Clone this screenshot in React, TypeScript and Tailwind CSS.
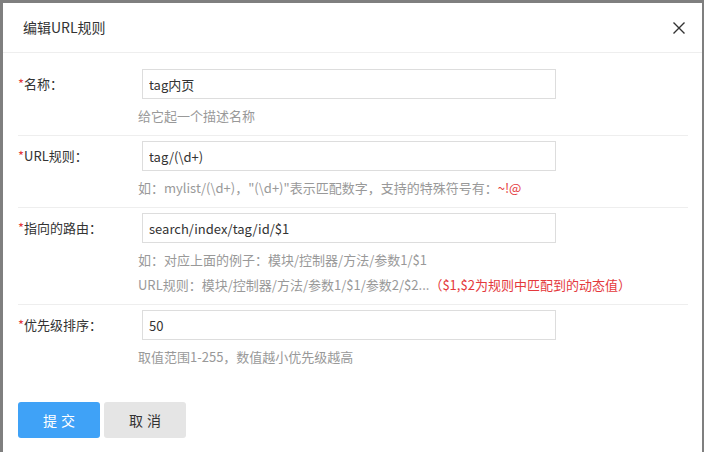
const font = { fontFamily: '"Noto Sans CJK SC", "Noto Sans", sans-serif' };

type Row = {
  label: string;
  value: string;
  hints: React.ReactNode[];
};

const rows: Row[] = [
  { label: '名称', value: 'tag内页', hints: ['给它起一个描述名称'] },
  {
    label: 'URL规则',
    value: 'tag/(\\d+)',
    hints: [
      <>
        如：mylist/(\d+)，"(\d+)"表示匹配数字，支持的特殊符号有：<span className="text-[#e4393c]">~!@</span>
      </>,
    ],
  },
  {
    label: '指向的路由',
    value: 'search/index/tag/id/$1',
    hints: [
      '如：对应上面的例子：模块/控制器/方法/参数1/$1',
      <>
        URL规则：模块/控制器/方法/参数1/$1/参数2/$2...<span className="text-[#e4393c]">（$1,$2为规则中匹配到的动态值）</span>
      </>,
    ],
  },
  { label: '优先级排序', value: '50', hints: ['取值范围1-255，数值越小优先级越高'] },
];

function FormRow({ row, first, last }: { row: Row; first: boolean; last: boolean }) {
  return (
    <div className={`${first ? 'pt-[16px]' : 'pt-[5px]'} pb-[7px] ${last ? '' : 'border-b border-[#eeeeee]'}`}>
      <div className="flex items-center">
        <label className="w-[124px] text-[13px] text-[#333]">
          <span className="text-[#e4393c]">*</span>
          {row.label}：
        </label>
        <input
          readOnly
          value={row.value}
          style={font}
          className="h-[30px] w-[414px] border border-[#dddddd] px-[6px] text-[13px] text-[#333] outline-none"
        />
      </div>
      <div className="ml-[120px] mt-[4px] text-[13px] leading-[25px] text-[#999]">
        {row.hints.map((h, i) => (
          <div key={i} className="h-[25px]">{h}</div>
        ))}
      </div>
    </div>
  );
}

export default function App() {
  return (
    <div className="relative h-[452px] w-[704px] overflow-hidden bg-[#7f7f7f]" style={font}>
      <div className="absolute left-[3px] top-[3px] h-[460px] w-[699px] bg-white">
        <div className="flex h-[50px] items-center justify-between border-b border-[#eeeeee] pl-[20px] pr-[17px]">
          <span className="text-[14px] text-[#333]">编辑URL规则</span>
          <svg width="12" height="12" viewBox="0 0 12 12" className="text-[#333]">
            <path d="M0.5 0.5 L11.5 11.5 M11.5 0.5 L0.5 11.5" stroke="currentColor" strokeWidth="1.4" />
          </svg>
        </div>
        <div className="pl-[15px] pr-[14px]">
          {rows.map((r, i) => (
            <FormRow key={r.label} row={r} first={i === 0} last={i === rows.length - 1} />
          ))}
          <div className="mt-[26px] flex gap-[4px]">
            <button className="h-[36px] w-[82px] rounded-[3px] bg-[#3fa2f7] pl-[4px] text-[14px] tracking-[4px] text-white">
              提交
            </button>
            <button className="h-[36px] w-[82px] rounded-[3px] bg-[#e5e5e5] pl-[4px] text-[14px] tracking-[4px] text-[#333]">
              取消
            </button>
          </div>
        </div>
      </div>
    </div>
  );
}
